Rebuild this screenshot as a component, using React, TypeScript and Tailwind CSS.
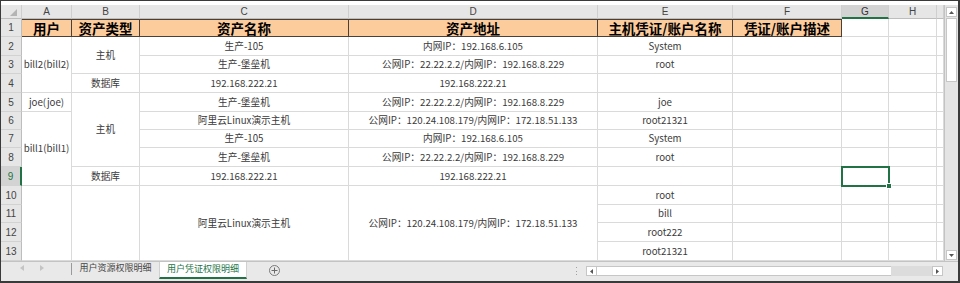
import React from "react";

const cjk = "font-['Noto_Sans_CJK_SC',sans-serif]";
const cell =
  "flex items-center justify-center border-r border-b border-[#dadada] text-[9.7px] text-[#3a3a3a] whitespace-nowrap overflow-hidden";
const orange =
  "flex items-center justify-center border-r border-b border-t border-[#4a4038] bg-[#fdcc9c] text-[13.5px] font-bold text-black whitespace-nowrap overflow-hidden";
const colHdr =
  "flex items-center justify-center bg-[#e6e6e6] border-r border-b border-r-[#cfcfcf] border-b-[#bdbdbd] text-[10px] text-[#444] font-['Liberation_Sans',sans-serif]";
const rowHdr =
  "flex items-center justify-center bg-[#e6e6e6] border-r border-b border-r-[#bdbdbd] border-b-[#d2d2d2] text-[10px] text-[#444] font-['Liberation_Sans',sans-serif]";

function RH({ n }: { n: number }) {
  return <div className={rowHdr}>{n}</div>;
}

function Blank() {
  return <div className={cell} />;
}

function Tail() {
  return (
    <>
      <Blank />
      <Blank />
      <Blank />
      <Blank />
    </>
  );
}

const ipA = "内网IP：192.168.6.105";
const ipB = "公网IP：22.22.2.2/内网IP：192.168.8.229";
const ipC = "公网IP：120.24.108.179/内网IP：172.18.51.133";

function Grid() {
  return (
    <div className="grid w-[943px] grid-cols-[21px_50px_68px_209px_249px_135px_109px_47px_48px_7px] grid-rows-[14px_18px_19px_18px_19px_19px_18px_18px_19px_19px_19px_18px_19px_19px]">
      <div className={colHdr + " relative"}>
        <svg className="absolute left-0 top-0" width="20" height="13" viewBox="0 0 20 13">
          <polygon points="16,4 16,11 9,11" fill="#b4b4b4" />
        </svg>
      </div>
      <div className={colHdr}>A</div>
      <div className={colHdr}>B</div>
      <div className={colHdr}>C</div>
      <div className={colHdr}>D</div>
      <div className={colHdr}>E</div>
      <div className={colHdr}>F</div>
      <div className="flex items-center justify-center bg-[#d3d3d3] border-r border-r-[#cfcfcf] border-b-2 border-b-[#217346] text-[10px] text-[#333] font-['Liberation_Sans',sans-serif]">
        G
      </div>
      <div className={colHdr}>H</div>
      <div className={colHdr} />

      <RH n={1} />
      <div className={orange}>用户</div>
      <div className={orange}>资产类型</div>
      <div className={orange}>资产名称</div>
      <div className={orange}>资产地址</div>
      <div className={orange}>主机凭证/账户名称</div>
      <div className={orange}>凭证/账户描述</div>
      <Blank />
      <Blank />
      <Blank />

      <RH n={2} />
      <div className={cell + " row-span-3"}>bill2(bill2)</div>
      <div className={cell + " row-span-2"}>主机</div>
      <div className={cell}>生产-105</div>
      <div className={cell}>{ipA}</div>
      <div className={cell}>System</div>
      <Tail />

      <RH n={3} />
      <div className={cell}>生产-堡垒机</div>
      <div className={cell}>{ipB}</div>
      <div className={cell}>root</div>
      <Tail />

      <RH n={4} />
      <div className={cell}>数据库</div>
      <div className={cell}>192.168.222.21</div>
      <div className={cell}>192.168.222.21</div>
      <Blank />
      <Tail />

      <RH n={5} />
      <div className={cell}>joe(joe)</div>
      <div className={cell + " row-span-4"}>主机</div>
      <div className={cell}>生产-堡垒机</div>
      <div className={cell}>{ipB}</div>
      <div className={cell}>joe</div>
      <Tail />

      <RH n={6} />
      <div className={cell + " row-span-4"}>bill1(bill1)</div>
      <div className={cell}>阿里云Linux演示主机</div>
      <div className={cell}>{ipC}</div>
      <div className={cell}>root21321</div>
      <Tail />

      <RH n={7} />
      <div className={cell}>生产-105</div>
      <div className={cell}>{ipA}</div>
      <div className={cell}>System</div>
      <Tail />

      <RH n={8} />
      <div className={cell}>生产-堡垒机</div>
      <div className={cell}>{ipB}</div>
      <div className={cell}>root</div>
      <Tail />

      <div className="flex items-center justify-center bg-[#d3d3d3] border-r-2 border-b border-r-[#217346] border-b-[#d2d2d2] text-[10px] text-[#217346] font-['Liberation_Sans',sans-serif]">
        9
      </div>
      <div className={cell}>数据库</div>
      <div className={cell}>192.168.222.21</div>
      <div className={cell}>192.168.222.21</div>
      <Blank />
      <Blank />
      <div className={cell + " relative overflow-visible"}>
        <div className="absolute -left-px -top-px -right-[2px] -bottom-[2px] z-10 border-2 border-[#217346]">
          <div className="absolute -right-[4px] -bottom-[4px] w-[6px] h-[6px] bg-[#217346] border border-white" />
        </div>
      </div>
      <Blank />
      <Blank />

      <RH n={10} />
      <div className={cell + " row-span-4"} />
      <div className={cell + " row-span-4"} />
      <div className={cell + " row-span-4"}>阿里云Linux演示主机</div>
      <div className={cell + " row-span-4"}>{ipC}</div>
      <div className={cell}>root</div>
      <Tail />

      <RH n={11} />
      <div className={cell}>bill</div>
      <Tail />

      <RH n={12} />
      <div className={cell}>root222</div>
      <Tail />

      <RH n={13} />
      <div className={cell}>root21321</div>
      <Tail />
    </div>
  );
}

function VScroll() {
  return (
    <div className="w-[14px] bg-[#e4e4e4] border-l border-[#c3c3c3] flex flex-col items-center pt-[2px] pb-[1px]">
      <div className="w-[11px] h-[10px] bg-white border border-[#c6c6c6] flex items-center justify-center">
        <svg width="5" height="3" viewBox="0 0 5 3">
          <polygon points="2.5,0 5,3 0,3" fill="#555" />
        </svg>
      </div>
      <div className="w-[11px] h-[64px] mt-px bg-white border border-[#c6c6c6]" />
      <div className="flex-1" />
      <div className="w-[11px] h-[10px] bg-white border border-[#c6c6c6] flex items-center justify-center">
        <svg width="5" height="3" viewBox="0 0 5 3">
          <polygon points="0,0 5,0 2.5,3" fill="#555" />
        </svg>
      </div>
    </div>
  );
}

function TabBar() {
  return (
    <div className="h-[20px] shrink-0 bg-[#e9e9e9] border-t border-[#c3c3c3] flex items-start">
      <div className="w-[70px] h-[12px] flex items-center">
        <svg className="ml-[19px]" width="4" height="6" viewBox="0 0 4 6">
          <polygon points="4,0 4,6 0,3" fill="#c4c4c4" />
        </svg>
        <svg className="ml-[16px]" width="4" height="6" viewBox="0 0 4 6">
          <polygon points="0,0 0,6 4,3" fill="#c4c4c4" />
        </svg>
      </div>
      <div className="w-px h-[12px] mt-px bg-[#9a9a9a]" />
      <div className="w-[87px] h-[11px] flex items-center justify-center text-[9px] text-[#444] leading-none">
        用户资源权限明细
      </div>
      <div className="w-[88px] h-[17px] bg-white border-x border-x-[#d0d0d0] border-b-2 border-b-[#217346] flex items-start justify-center pt-px text-[9px] leading-[11px] text-[#217346]">
        用户凭证权限明细
      </div>
      <div className="w-[22px]" />
      <div className="w-[11px] h-[11px] mt-[3px] rounded-full border border-[#7a7a7a] flex items-center justify-center">
        <svg width="7" height="7" viewBox="0 0 7 7">
          <path d="M3.5 0.5 V6.5 M0.5 3.5 H6.5" stroke="#6a6a6a" strokeWidth="1" />
        </svg>
      </div>
      <div className="w-[293px]" />
      <div className="w-[6px] h-[10px] mt-[4px] flex flex-col items-center justify-between py-px">
        <div className="w-px h-px bg-[#a0a0a0]" />
        <div className="w-px h-px bg-[#a0a0a0]" />
        <div className="w-px h-px bg-[#a0a0a0]" />
      </div>
      <div className="w-[7px]" />
      <div className="w-[11px] h-[10px] mt-[4px] bg-white border border-[#c6c6c6] flex items-center justify-center">
        <svg width="3" height="5" viewBox="0 0 3 5">
          <polygon points="3,0 3,5 0,2.5" fill="#555" />
        </svg>
      </div>
      <div className="w-[294px] h-[10px] mt-[4px] bg-white border-y border-[#c6c6c6]" />
      <div className="w-[41px] h-[10px] mt-[4px] bg-[#dcdcdc]" />
      <div className="w-[11px] h-[10px] mt-[4px] bg-white border border-[#c6c6c6] flex items-center justify-center">
        <svg width="3" height="5" viewBox="0 0 3 5">
          <polygon points="0,0 0,5 3,2.5" fill="#555" />
        </svg>
      </div>
    </div>
  );
}

export default function App() {
  return (
    <div
      className={
        "w-[960px] h-[283px] bg-white border-t border-l border-r-2 border-b-2 border-[#3a3a3a] flex flex-col overflow-hidden " +
        cjk
      }
    >
      <div className="h-[4px] shrink-0" />
      <div className="flex h-[256px] shrink-0">
        <Grid />
        <VScroll />
      </div>
      <TabBar />
    </div>
  );
}
